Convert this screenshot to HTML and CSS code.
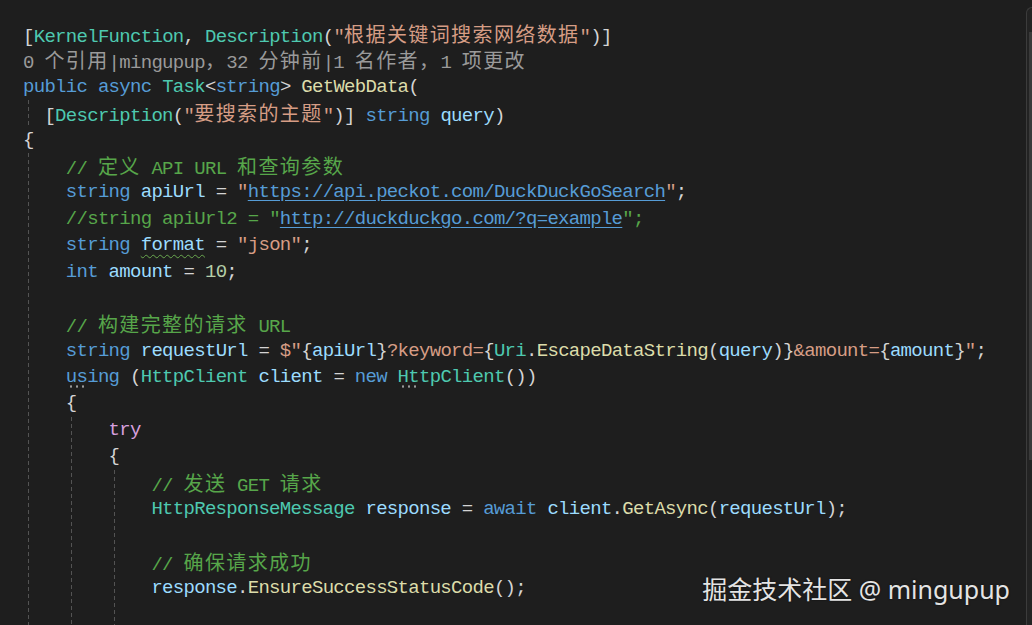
FILE: index.html
```html
<!DOCTYPE html>
<html lang="zh-CN">
<head>
<meta charset="utf-8">
<title>GetWebData</title>
<link rel="stylesheet" href="styles.css">
</head>
<body>
<div class="screen">
  <div class="editor">
    <div class="ln"><span class="p">[</span><span class="t">KernelFunction</span><span class="p">, </span><span class="t">Description</span><span class="p">(</span><span class="s">"<span class="cjk">根据关键词搜索网络数据</span>"</span><span class="p">)]</span></div>
    <div class="ln lens">0 <span class="cjk">个引用</span>|mingupup<span class="cjk">，</span>32 <span class="cjk">分钟前</span>|1 <span class="cjk">名作者，</span>1 <span class="cjk">项更改</span></div>
    <div class="ln"><span class="k">public</span> <span class="k">async</span> <span class="t">Task</span><span class="p">&lt;</span><span class="k">string</span><span class="p">&gt;</span> <span class="m">GetWebData</span><span class="p">(</span></div>
    <div class="blk half">
      <div class="ln"><span class="p">[</span><span class="t">Description</span><span class="p">(</span><span class="s">"<span class="cjk">要搜索的主题</span>"</span><span class="p">)]</span> <span class="k">string</span> <span class="v">query</span><span class="p">)</span></div>
    </div>
    <div class="ln"><span class="p">{</span></div>
    <div class="blk">
      <div class="ln c">// <span class="cjk">定义</span> API URL <span class="cjk">和查询参数</span></div>
      <div class="ln"><span class="k">string</span> <span class="v">apiUrl</span> <span class="p">=</span> <span class="s">"</span><span class="url">https://api.peckot.com/DuckDuckGoSearch</span><span class="s">"</span><span class="p">;</span></div>
      <div class="ln c">//string apiUrl2 = "<span class="url">http://duckduckgo.com/?q=example</span>";</div>
      <div class="ln"><span class="k">string</span> <span class="v squig">format</span> <span class="p">=</span> <span class="s">"json"</span><span class="p">;</span></div>
      <div class="ln"><span class="k">int</span> <span class="v">amount</span> <span class="p">=</span> <span class="n">10</span><span class="p">;</span></div>
      <div class="ln"></div>
      <div class="ln c">// <span class="cjk">构建完整的请求</span> URL</div>
      <div class="ln"><span class="k">string</span> <span class="v">requestUrl</span> <span class="p">=</span> <span class="s">$"</span><span class="p">{</span><span class="v">apiUrl</span><span class="p">}</span><span class="s">?keyword=</span><span class="p">{</span><span class="t">Uri</span><span class="p">.</span><span class="m">EscapeDataString</span><span class="p">(</span><span class="v">query</span><span class="p">)}</span><span class="s">&amp;amount=</span><span class="p">{</span><span class="v">amount</span><span class="p">}</span><span class="s">"</span><span class="p">;</span></div>
      <div class="ln"><span class="k dots">using</span> <span class="p">(</span><span class="t">HttpClient</span> <span class="v">client</span> <span class="p">=</span> <span class="k">new</span> <span class="t dots">HttpClient</span><span class="p">())</span></div>
      <div class="ln"><span class="p">{</span></div>
      <div class="blk">
        <div class="ln"><span class="ctl">try</span></div>
        <div class="ln"><span class="p">{</span></div>
        <div class="blk">
          <div class="ln c">// <span class="cjk">发送</span> GET <span class="cjk">请求</span></div>
          <div class="ln"><span class="t">HttpResponseMessage</span> <span class="v">response</span> <span class="p">=</span> <span class="k">await</span> <span class="v">client</span><span class="p">.</span><span class="m">GetAsync</span><span class="p">(</span><span class="v">requestUrl</span><span class="p">);</span></div>
          <div class="ln"></div>
          <div class="ln c">// <span class="cjk">确保请求成功</span></div>
          <div class="ln"><span class="v">response</span><span class="p">.</span><span class="m">EnsureSuccessStatusCode</span><span class="p">();</span></div>
          <div class="ln"></div>
        </div>
      </div>
    </div>
  </div>
  <div class="vscroll"><div class="thumb"></div></div>
  <div class="watermark">掘金技术社区 @ mingupup</div>
</div>
</body>
</html>
```

FILE: styles.css
```css
html, body {
  margin: 0;
  padding: 0;
  background: #1e1e1e;
}

.screen {
  position: relative;
  width: 1032px;
  height: 625px;
  display: flex;
  overflow: hidden;
  background: #1e1e1e;
}

.editor {
  flex: 1;
  padding: 21px 0 0 23px;
  overflow: hidden;
  font-family: "Liberation Mono", "Noto Sans CJK SC", monospace;
  font-size: 19px;
  letter-spacing: -0.7px;
  color: #d4d4d4;
}

.ln {
  height: 26.4px;
  line-height: 26.4px;
  white-space: pre;
}

.blk {
  padding-left: 42.8px;
  background-image: repeating-linear-gradient(to bottom, #535353 0 4px, transparent 4px 7px);
  background-size: 1px 100%;
  background-position: 5px 0;
  background-repeat: no-repeat;
}

.blk.half {
  padding-left: 21.4px;
}

.cjk {
  font-family: "Noto Sans CJK SC", sans-serif;
  font-size: 20px;
  letter-spacing: 1.4px;
}

.p { color: #d4d4d4; }
.t { color: #4ec9b0; }
.k { color: #569cd6; }
.m { color: #dcdcaa; }
.v { color: #9cdcfe; }
.s { color: #d69d85; }
.n { color: #b5cea8; }
.c { color: #57a64a; }
.ctl { color: #d8a0df; }
.lens { color: #9a9a9a; }

.url {
  color: #569cd6;
  text-decoration: underline;
  text-decoration-color: #569cd6;
  text-underline-offset: 3px;
}

.squig {
  text-decoration: underline wavy #6aa84f;
  text-decoration-thickness: 1px;
  text-underline-offset: 4px;
}

.dots {
  position: relative;
}

.dots::after {
  content: "";
  position: absolute;
  left: 2px;
  bottom: 0;
  width: 17px;
  height: 3px;
  background: radial-gradient(circle, #9a9a9a 0 1px, transparent 1.3px) 0 0 / 6px 3px repeat-x;
}

.vscroll {
  flex: none;
  width: 5px;
  margin-top: 7px;
  border-left: 1px solid #3c3c3c;
  border-top: 1px solid #3c3c3c;
  border-top-left-radius: 6px;
  background: #232323;
}

.thumb {
  margin: 24px 0 0 2px;
  height: 428px;
  background: #3a3a3a;
}

.watermark {
  position: absolute;
  right: 22px;
  bottom: 19px;
  font-family: "Noto Sans", "Noto Sans CJK SC", sans-serif;
  font-size: 25px;
  color: #e4e4e4;
  text-shadow: 0 0 2px rgba(0, 0, 0, 0.6);
  white-space: nowrap;
}
```
